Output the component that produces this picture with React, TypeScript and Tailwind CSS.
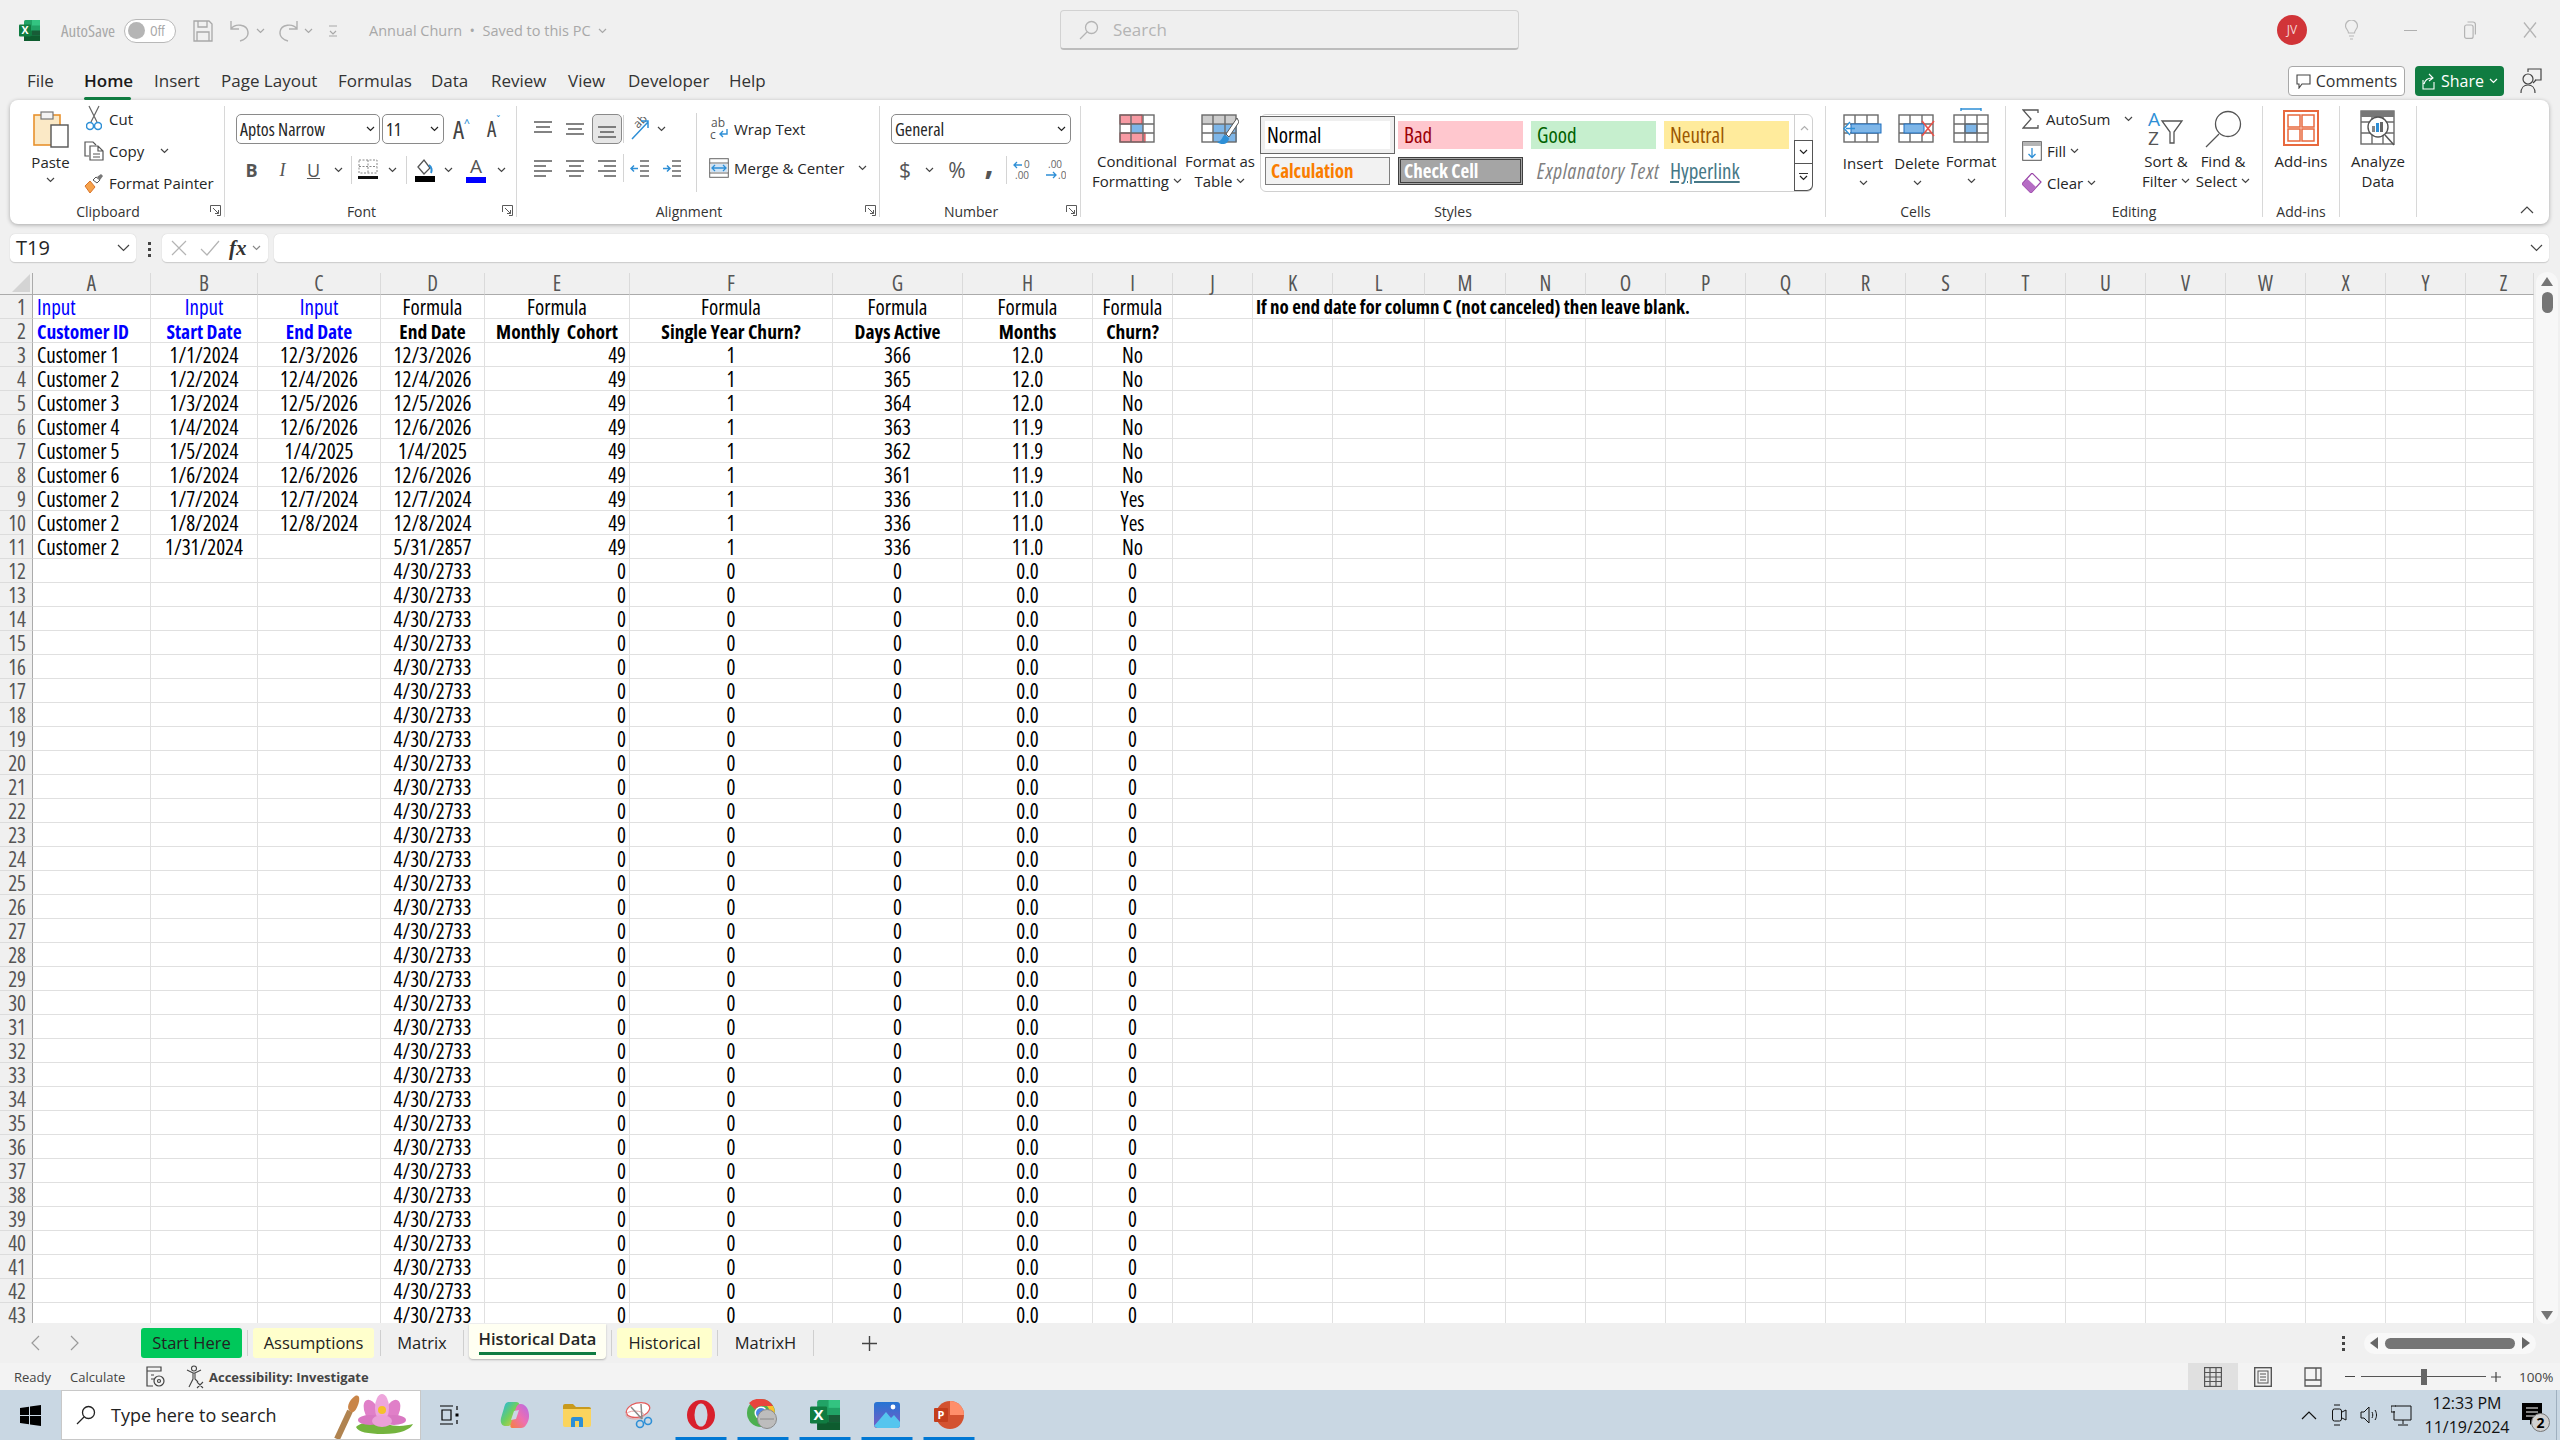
import React from "react";

const Chev = ({ c = "#444", w = 9 }: { c?: string; w?: number }) => (
  <svg width={w} height={6} viewBox="0 0 9 6" fill="none" stroke={c} strokeWidth="1.2"><path d="M1 1l3.5 3.5L8 1" /></svg>
);

const XlLogo = ({ s = 21 }: { s?: number }) => (
  <svg width={s} height={s} viewBox="0 0 21 21">
    <rect x="5" y="0" width="16" height="21" rx="1.5" fill="#21a366" />
    <rect x="13" y="0" width="8" height="5.5" fill="#33c481" />
    <rect x="5" y="10.5" width="8" height="5" fill="#107c41" />
    <rect x="13" y="10.5" width="8" height="5" fill="#185c37" />
    <rect x="5" y="15.5" width="16" height="5.5" fill="#0e5c2f" />
    <rect x="0" y="4.5" width="12" height="12" rx="1" fill="#107c41" />
    <text x="6" y="14" textAnchor="middle" fontSize="10.5" fontWeight="700" fill="#fff" fontFamily="Open Sans, sans-serif">X</text>
  </svg>
);

const Lines = ({ rows, c = "#5a5a5a" }: { rows: [number, number, number][]; c?: string }) => (
  <svg width="20" height="20" viewBox="0 0 20 20" stroke={c} strokeWidth="1.5">
    {rows.map(([a, b, y], i) => <path key={i} d={`M${a} ${y}H${b}`} />)}
  </svg>
);

const TableIcon = ({ w = 36, h = 28 }: { w?: number; h?: number }) => {
  const cols = [Math.round(w / 3), Math.round((2 * w) / 3)];
  const rows = [Math.round(h / 3), Math.round((2 * h) / 3)];
  return (
    <g stroke="#6a6a6a" strokeWidth="1.4" fill="none">
      <rect x="1" y="1" width={w - 2} height={h - 2} />
      {cols.map((x) => <path key={x} d={`M${x} 1V${h - 1}`} />)}
      {rows.map((y) => <path key={y} d={`M1 ${y}H${w - 1}`} />)}
    </g>
  );
};

const BigBtn = ({ icon, l1, l2, chev = true, pt = "pt-[8px]", tmt = "", w }: { icon: React.ReactNode; l1: string; l2?: string; chev?: boolean; pt?: string; tmt?: string; w: string }) => (
  <div className={`flex flex-col items-center ${w}`}>
    <div className={`flex h-[45px] items-start justify-center ${pt}`}>{icon}</div>
    <div className={`whitespace-nowrap text-center leading-[20px] ${tmt}`}>{l1}</div>
    {l2 ? (
      <div className="flex items-center gap-[4px] whitespace-nowrap leading-[20px]">{l2}{chev && <Chev />}</div>
    ) : chev ? (
      <div className="flex h-[20px] items-center"><Chev /></div>
    ) : null}
  </div>
);

const Cellc = ({ w, children, cls = "" }: { w: string; children?: React.ReactNode; cls?: string }) => (
  <div className={`flex h-full shrink-0 items-center justify-center ${w} ${cls}`}>{children}</div>
);

const VSep = () => <div className="h-[28px] w-0 shrink-0 border-l border-[#d4d4d4]" />;

const Launcher = () => (
  <svg width="11" height="11" viewBox="0 0 11 11" fill="none" stroke="#5a5a5a" strokeWidth="1"><path d="M.5 7V.5H10.5V10.5H7" /><path d="M3 3l5.5 5.5M8.5 5v3.5H5" /></svg>
);

const Group = ({ w, label, launcher, children }: { w: string; label?: string; launcher?: boolean; children: React.ReactNode }) => (
  <div className={`relative flex h-[111px] shrink-0 flex-col border-r border-[#d8d8d8] ${w}`}>
    <div className="h-[97px] shrink-0">{children}</div>
    <div className={`relative text-center text-[14px] leading-[18px] text-[#333] ${launcher ? "pr-[18px]" : ""}`}>
      {label}
      {launcher && <span className="absolute right-[3px] top-[2px]"><Launcher /></span>}
    </div>
  </div>
);

const Select = ({ w, text, cls = "" }: { w: string; text: string; cls?: string }) => (
  <div className={`flex h-[30px] shrink-0 items-center justify-between rounded-[5px] border border-[#8a8a8a] bg-white pl-[3px] pr-[4px] text-[18px] ${w} ${cls}`}>
    <span className="whitespace-nowrap [font-stretch:75%]">{text}</span><Chev c="#222" />
  </div>
);

const letters = "ABCDEFGHIJKLMNOPQRSTUVWXYZ".split("");
const data: string[][] = [
  ["Customer 1", "1/1/2024", "12/3/2026", "12/3/2026", "49", "1", "366", "12.0", "No"],
  ["Customer 2", "1/2/2024", "12/4/2026", "12/4/2026", "49", "1", "365", "12.0", "No"],
  ["Customer 3", "1/3/2024", "12/5/2026", "12/5/2026", "49", "1", "364", "12.0", "No"],
  ["Customer 4", "1/4/2024", "12/6/2026", "12/6/2026", "49", "1", "363", "11.9", "No"],
  ["Customer 5", "1/5/2024", "1/4/2025", "1/4/2025", "49", "1", "362", "11.9", "No"],
  ["Customer 6", "1/6/2024", "12/6/2026", "12/6/2026", "49", "1", "361", "11.9", "No"],
  ["Customer 2", "1/7/2024", "12/7/2024", "12/7/2024", "49", "1", "336", "11.0", "Yes"],
  ["Customer 2", "1/8/2024", "12/8/2024", "12/8/2024", "49", "1", "336", "11.0", "Yes"],
  ["Customer 2", "1/31/2024", "", "5/31/2857", "49", "1", "336", "11.0", "No"],
];
const r1 = ["Input", "Input", "Input", "Formula", "Formula", "Formula", "Formula", "Formula", "Formula"];
const r2 = ["Customer ID", "Start Date", "End Date", "End Date", "Monthly  Cohort", "Single Year Churn?", "Days Active", "Months", "Churn?"];
const zero = ["", "", "", "4/30/2733", "0", "0", "0", "0.0", "0"];

const Gc = ({ al, text, cls = "" }: { al: string; text?: string; cls?: string }) => (
  <div className={`flex items-center whitespace-pre border-b border-r border-[#e0e0e0] bg-white pt-[2px] text-black ${al} ${cls}`}>{text}</div>
);

const Rh = ({ n }: { n: number }) => (
  <div className="flex items-center justify-end border-b border-r border-b-[#dcdcdc] border-r-[#ababab] bg-[#f0f0f0] pr-[6px] pt-[1px] text-[#555]">{n}</div>
);

const Sheet = () => {
  const rows: React.ReactNode[] = [];
  for (let r = 1; r <= 43; r++) {
    rows.push(<Rh key={`h${r}`} n={r} />);
    const vals = r === 1 ? r1 : r === 2 ? r2 : r <= 11 ? data[r - 3] : zero;
    for (let c = 0; c < 26; c++) {
      if (r === 1 && c === 10) {
        rows.push(<Gc key="note" al="justify-start pl-[3px]" cls="col-span-6 text-[19px] font-bold" text="If no end date for column C (not canceled) then leave blank." />);
        c = 15;
        continue;
      }
      let cls = "";
      if (r === 1 && c < 3) cls = "!text-[#0000ff]";
      if (r === 2) cls = c < 3 ? "text-[19.5px] font-bold !text-[#0000ff]" : "text-[19.5px] font-bold";
      const al = c === 0 ? "justify-start pl-[4px]" : c === 4 && r > 2 ? "justify-end pr-[3px]" : "justify-center";
      rows.push(<Gc key={`${r}-${c}`} al={al} text={vals[c]} cls={cls} />);
    }
  }
  return (
    <div className="grid h-[1050px] w-[2534px] shrink-0 grid-cols-[33px_118px_107px_123px_104px_145px_203px_130px_130px_80px_80px_80px_92px_81px_80px_80px_80px_80px_80px_80px_80px_80px_80px_80px_80px_80px_68px] auto-rows-[24px] grid-rows-[22px] overflow-hidden text-[21px] leading-[21px] [font-stretch:75%]">
      <div className="flex items-end justify-end border-b border-r border-[#ababab] bg-[#f0f0f0] pb-[2px] pr-[2px]">
        <svg width="18" height="18" viewBox="0 0 18 18"><path d="M18 0V18H0Z" fill="#d4d4d4" /></svg>
      </div>
      {letters.map((l) => (
        <div key={l} className={`flex items-center justify-center border-b border-r border-b-[#ababab] border-r-[#dadada] bg-[#f0f0f0] text-[#555] ${l === "Z" ? "pl-[8px]" : ""}`}>{l}</div>
      ))}
      {rows}
    </div>
  );
};

const SheetTab = ({ t, cls }: { t: string; cls: string }) => (
  <div className={`flex h-[30px] shrink-0 items-center justify-center whitespace-nowrap rounded-[3px] text-[#222] ${cls}`}>{t}</div>
);
const TabSep = ({ cls = "" }: { cls?: string }) => <div className={`h-[26px] w-0 shrink-0 border-l border-[#cfcfcf] ${cls}`} />;

const Ti = ({ u = false, children }: { u?: boolean; children: React.ReactNode }) => (
  <div className="relative flex h-full w-[62px] shrink-0 items-center justify-center">
    {children}
    {u && <span className="absolute bottom-0 left-1/2 h-[3px] w-[51px] -translate-x-1/2 bg-[#0078d4]" />}
  </div>
);

export default function App() {
  return (
    <div className="flex h-[1440px] w-[2560px] flex-col overflow-hidden bg-[#f0f0f0] text-[15px] leading-[20px] text-[#262626] [font-family:'Open_Sans',sans-serif] [font-stretch:88%]">
      {/* Title bar */}
      <div className="flex h-[60px] shrink-0 items-center">
        <div className="flex w-[1060px] shrink-0 items-center pl-[19px] pt-[1px] text-[#a8a8a8]">
          <XlLogo />
          <span className="ml-[21px] w-[54px] whitespace-nowrap text-[17px] [font-stretch:75%]">AutoSave</span>
          <div className="ml-[9px] flex h-[24px] w-[52px] items-center rounded-full border border-[#b8b8b8] bg-white pl-[3px]">
            <span className="h-[17px] w-[17px] rounded-full bg-[#b5b5b5]" />
            <span className="ml-[5px] text-[14px] [font-stretch:75%]">Off</span>
          </div>
          <svg className="ml-[17px]" width="20" height="22" viewBox="0 0 20 22" fill="none" stroke="#a8a8a8" strokeWidth="1.3"><path d="M1 1h15l3 3v17H1z" /><path d="M5 1v6h9V1M4 21v-9h12v9" /></svg>
          <svg className="ml-[16px]" width="22" height="24" viewBox="0 0 22 24" fill="none" stroke="#b0b0b0" strokeWidth="1.4"><path d="M2 2v8h8M2 10c4-6 16-5 17 3 .5 5-4 8-8 9" /></svg>
          <span className="ml-[5px]"><Chev c="#a8a8a8" /></span>
          <svg className="ml-[12px]" width="22" height="24" viewBox="0 0 22 24" fill="none" stroke="#b0b0b0" strokeWidth="1.4"><path d="M20 2v8h-8M20 10C16 4 4 5 3 13c-.5 5 4 8 8 9" /></svg>
          <span className="ml-[5px]"><Chev c="#a8a8a8" /></span>
          <svg className="ml-[15px]" width="10" height="12" viewBox="0 0 10 12" fill="none" stroke="#a8a8a8" strokeWidth="1.2"><path d="M1 1h8M2 6l3 3 3-3M1 11h8" /></svg>
          <span className="ml-[31px] whitespace-pre text-[14.5px]">Annual Churn  •  Saved to this PC</span>
          <span className="ml-[6px]"><Chev c="#a8a8a8" w={11} /></span>
        </div>
        <div className="flex h-[40px] w-[459px] shrink-0 items-center rounded-[4px] border border-b-2 border-[#d2d2d2] border-b-[#bcbcbc] bg-[#efefef] pl-[18px] text-[17px] text-[#b4b4b4]">
          <svg width="20" height="20" viewBox="0 0 20 20" fill="none" stroke="#b4b4b4" strokeWidth="1.3"><circle cx="12.5" cy="7.5" r="6" /><path d="M8 12L1 19" /></svg>
          <span className="ml-[14px]">Search</span>
        </div>
        <div className="ml-auto flex items-center">
          <div className="flex h-[30px] w-[30px] items-center justify-center rounded-full bg-[#d13438] text-[12px] text-[#f5d5d5]">JV</div>
          <div className="ml-[34px] flex w-[20px] justify-center">
            <svg width="13" height="20" viewBox="0 0 13 20" fill="none" stroke="#b8b8b8" strokeWidth="1.2"><path d="M3.5 13c0-3-3-4-3-7a6 6 0 0112 0c0 3-3 4-3 7zM4 16h5M5 19h3" /></svg>
          </div>
          <div className="ml-[43px] h-[1px] w-[13px] bg-[#b0b0b0]" />
          <svg className="ml-[47px]" width="12" height="18" viewBox="0 0 12 18" fill="none" stroke="#b4b4b4" strokeWidth="1.2"><rect x=".6" y="4" width="8.5" height="13.4" rx="2" /><path d="M3.5 1h5.5a2.4 2.4 0 012.4 2.4v10" /></svg>
          <svg className="ml-[47px] mr-[23px]" width="14" height="18" viewBox="0 0 14 18" fill="none" stroke="#b4b4b4" strokeWidth="1.3"><path d="M1 1.5l12 15M13 1.5l-12 15" /></svg>
        </div>
      </div>

      {/* Tabs */}
      <div className="flex h-[40px] shrink-0 items-center pl-[27px] pt-[2px] text-[17px] text-[#333]">
        <span className="w-[57px]">File</span>
        <span className="relative w-[70px] font-semibold text-[#1a1a1a]">Home<span className="absolute bottom-[-9px] left-0 h-[3px] w-[47px] rounded bg-[#107c41]" /></span>
        <span className="w-[67px]">Insert</span>
        <span className="w-[117px]">Page Layout</span>
        <span className="w-[93px]">Formulas</span>
        <span className="w-[60px]">Data</span>
        <span className="w-[77px]">Review</span>
        <span className="w-[60px]">View</span>
        <span className="w-[101px]">Developer</span>
        <span>Help</span>
        <div className="ml-auto flex items-center pr-[18px]">
          <div className="flex h-[30px] w-[117px] items-center justify-center gap-[5px] rounded-[4px] border border-[#a8a8a8] bg-white text-[16px]">
            <svg width="15" height="15" viewBox="0 0 15 15" fill="none" stroke="#444" strokeWidth="1.1"><path d="M1 1h13v9H6l-3 4v-4H1z" /></svg>
            Comments
          </div>
          <div className="ml-[10px] flex h-[30px] w-[89px] items-center justify-center gap-[5px] rounded-[4px] bg-[#107c41] text-[16px] text-white">
            <svg width="15" height="17" viewBox="0 0 15 17" fill="none" stroke="#fff" strokeWidth="1.1"><path d="M2 7v9h11V9M3 11c1-4 4-6 8-6M8 1l4 4-4 3" /></svg>
            Share<Chev c="#fff" />
          </div>
          <svg className="ml-[16px]" width="22" height="26" viewBox="0 0 22 26" fill="none" stroke="#444" strokeWidth="1.2"><circle cx="8" cy="11" r="5" /><path d="M1 25c0-5 3-8 7-8s7 3 7 8" /><path d="M8 4V1h13v11h-6" /><path d="M13 15l3-3" /></svg>
        </div>
      </div>

      {/* Ribbon */}
      <div className="mx-[10px] flex h-[124px] w-[2539px] shrink-0 rounded-[8px] bg-white pt-[6px] shadow-[0_1px_4px_rgba(0,0,0,0.3)]">
        <Group w="w-[215px]" label="Clipboard" launcher>
          <div className="flex h-full">
            <div className="ml-[10px] flex w-[61px] flex-col items-center pt-[4px]">
              <svg width="36" height="38" viewBox="0 0 36 38" fill="none">
                <rect x="1" y="5" width="26" height="30" fill="#fbe9c6" stroke="#e8912d" strokeWidth="1.6" />
                <rect x="8" y="2" width="12" height="7" fill="#f3f3f3" stroke="#777" strokeWidth="1.2" />
                <rect x="18" y="15" width="17" height="22" fill="#fff" stroke="#555" strokeWidth="1.4" />
              </svg>
              <span className="mt-[4px] leading-[20px]">Paste</span>
              <span className="mt-[5px]"><Chev /></span>
            </div>
            <div className="ml-[3px] mt-[-3px] flex flex-col">
              <div className="flex h-[32px] items-center">
                <svg className="ml-[2px]" width="16" height="28" viewBox="0 0 16 28" fill="none"><path d="M3 1l8 16M13 1L5 17" stroke="#666" strokeWidth="1.2" /><circle cx="4" cy="21" r="3.5" stroke="#2e8fd6" strokeWidth="1.5" /><circle cx="12" cy="21" r="3.5" stroke="#2e8fd6" strokeWidth="1.5" /></svg>
                <span className="ml-[7px]">Cut</span>
              </div>
              <div className="flex h-[32px] items-center">
                <svg width="20" height="20" viewBox="0 0 20 20" fill="none" stroke="#555" strokeWidth="1.2"><path d="M5 15H1V1h8l3 3" /><path d="M6 5h8l5 5v9H6zM14 5v5h5M9 13h7M9 16h7" /></svg>
                <span className="ml-[5px]">Copy</span>
                <span className="ml-[16px]"><Chev /></span>
              </div>
              <div className="flex h-[32px] items-center">
                <svg width="20" height="20" viewBox="0 0 20 20"><path d="M6 8l5 6-5 6-5-7z" fill="#f6a24b" stroke="#d9752b" /><path d="M9 7l3-3 4 3-3 3z" fill="#fff" stroke="#555" /><path d="M13 4l4-3 2 2-3 4" fill="#777" /></svg>
                <span className="ml-[5px] whitespace-nowrap">Format Painter</span>
              </div>
            </div>
          </div>
        </Group>

        <Group w="w-[292px]" label="Font" launcher>
          <div className="flex pl-[11px] pt-[8px]">
            <Select w="w-[144px]" text="Aptos Narrow" />
            <Select w="ml-[2px] w-[62px]" text="11" />
            <div className="ml-[9px] flex w-[20px] items-start text-[25px] leading-[30px] text-[#444] [font-stretch:75%]">A<span className="mt-[-6px] text-[13px] text-[#2e8fd6]">^</span></div>
            <div className="ml-[14px] flex w-[20px] items-start text-[21px] leading-[30px] text-[#444] [font-stretch:75%]">A<span className="mt-[-8px] text-[12px] text-[#2e8fd6]">ˇ</span></div>
          </div>
          <div className="ml-[11px] mt-[12px] flex h-[28px] items-center text-[#555]">
            <Cellc w="w-[31px]" cls="text-[18px] font-bold">B</Cellc>
            <Cellc w="w-[31px]" cls="text-[18px] italic [font-family:'Liberation_Serif',serif]">I</Cellc>
            <Cellc w="w-[31px]" cls="text-[18px] underline">U</Cellc>
            <Cellc w="w-[18px]"><Chev /></Cellc>
            <div className="ml-[4px]"><VSep /></div>
            <Cellc w="w-[31px]">
              <svg width="20" height="22" viewBox="0 0 20 22" fill="none"><path d="M1 1h18v13H1zM10 1v13M1 7.5h18" stroke="#888" strokeDasharray="2 1.5" /><rect x="0" y="17" width="20" height="3" fill="#111" /></svg>
            </Cellc>
            <Cellc w="w-[18px]"><Chev /></Cellc>
            <div className="ml-[5px]"><VSep /></div>
            <Cellc w="w-[30px]" cls="ml-[3px]">
              <svg width="20" height="24" viewBox="0 0 20 24"><path d="M3 9l6-7 6 8-6 6z" fill="none" stroke="#555" strokeWidth="1.3" /><path d="M14 7c3 2 3 6 2 8" stroke="#2e8fd6" strokeWidth="2" fill="none" /><rect x="0" y="18" width="20" height="6" fill="#000" /></svg>
            </Cellc>
            <Cellc w="w-[16px]"><Chev /></Cellc>
            <Cellc w="w-[36px]" cls="ml-[2px]">
              <svg width="20" height="26" viewBox="0 0 20 26"><text x="10" y="16" textAnchor="middle" fontSize="19" fill="#555" fontFamily="Open Sans, sans-serif">A</text><rect x="0" y="20" width="20" height="6" fill="#0000ff" /></svg>
            </Cellc>
            <Cellc w="w-[14px]"><Chev /></Cellc>
          </div>
        </Group>

        <Group w="w-[363px]" label="Alignment" launcher>
          <div className="flex pt-[8px]">
            <div className="ml-[10px] flex w-[169px] flex-col">
              <div className="flex h-[30px] items-center">
                <Cellc w="w-[32px]"><Lines rows={[[1, 19, 3], [3, 17, 8], [1, 19, 13]]} /></Cellc>
                <Cellc w="w-[32px]"><Lines rows={[[1, 19, 5], [3, 17, 10], [1, 19, 15]]} /></Cellc>
                <Cellc w="w-[30px]" cls="ml-[1px] rounded-[5px] border border-[#8a8a8a] bg-[#e6e6e6]"><Lines rows={[[1, 19, 8], [3, 17, 13], [1, 19, 18]]} /></Cellc>
                <div className="ml-[1px]"><VSep /></div>
                <Cellc w="w-[32px]">
                  <svg width="24" height="24" viewBox="0 0 24 24"><text x="8" y="13" fontSize="12" fill="#555" transform="rotate(-45 8 10)" fontFamily="Open Sans, sans-serif">ab</text><path d="M4 22L20 5M13 4h7v7" fill="none" stroke="#2e8fd6" strokeWidth="1.5" /></svg>
                </Cellc>
                <Cellc w="w-[10px]"><Chev /></Cellc>
              </div>
              <div className="mt-[10px] flex h-[28px] items-center">
                <Cellc w="w-[32px]"><Lines rows={[[1, 19, 3], [1, 13, 8], [1, 19, 13], [1, 13, 18]]} /></Cellc>
                <Cellc w="w-[32px]"><Lines rows={[[1, 19, 3], [4, 16, 8], [1, 19, 13], [4, 16, 18]]} /></Cellc>
                <Cellc w="w-[32px]"><Lines rows={[[1, 19, 3], [7, 19, 8], [1, 19, 13], [7, 19, 18]]} /></Cellc>
                <VSep />
                <Cellc w="w-[32px]">
                  <svg width="20" height="20" viewBox="0 0 20 20" fill="none"><path d="M10 3h9M10 8h9M10 13h9M10 18h9" stroke="#666" strokeWidth="1.4" /><path d="M8 10.5H1M4 7.5l-3 3 3 3" stroke="#2e8fd6" strokeWidth="1.5" /></svg>
                </Cellc>
                <Cellc w="w-[32px]">
                  <svg width="20" height="20" viewBox="0 0 20 20" fill="none"><path d="M10 3h9M10 8h9M10 13h9M10 18h9" stroke="#666" strokeWidth="1.4" /><path d="M1 10.5h7M5 7.5l3 3-3 3" stroke="#2e8fd6" strokeWidth="1.5" /></svg>
                </Cellc>
              </div>
            </div>
            <div className="mt-[-1px] h-[79px] w-0 border-l border-[#d4d4d4]" />
            <div className="flex flex-col">
              <div className="flex h-[30px] items-center">
                <Cellc w="w-[37px]" cls="pl-[8px]">
                  <svg width="22" height="24" viewBox="0 0 22 24"><text x="2" y="10" fontSize="12" fill="#555" fontFamily="Open Sans, sans-serif">ab</text><text x="1" y="22" fontSize="12" fill="#555" fontFamily="Open Sans, sans-serif">c</text><path d="M18 12v5h-7M14 14l-3 3 3 3" fill="none" stroke="#2e8fd6" strokeWidth="1.4" /></svg>
                </Cellc>
                <span className="whitespace-nowrap">Wrap Text</span>
              </div>
              <div className="mt-[10px] flex h-[28px] items-center">
                <Cellc w="w-[37px]" cls="pl-[6px]">
                  <svg width="20" height="20" viewBox="0 0 20 20" fill="none"><rect x=".7" y=".7" width="18.6" height="18.6" stroke="#666" /><path d="M.7 5h18.6M.7 15h18.6" stroke="#666" /><rect x="2" y="6" width="16" height="8" fill="#cfe3f5" /><path d="M3 10h14M6 7l-3 3 3 3M14 7l3 3-3 3" stroke="#2e8fd6" strokeWidth="1.3" /></svg>
                </Cellc>
                <span className="whitespace-nowrap">Merge &amp; Center</span>
                <span className="ml-[14px]"><Chev /></span>
              </div>
            </div>
          </div>
        </Group>

        <Group w="w-[201px]" label="Number" launcher>
          <div className="pl-[11px] pt-[8px]">
            <Select w="w-[180px]" text="General" />
            <div className="mt-[12px] flex h-[28px] items-center text-[#555]">
              <Cellc w="w-[28px]" cls="text-[21px]">$</Cellc>
              <Cellc w="w-[18px]" cls="ml-[1px]"><Chev /></Cellc>
              <Cellc w="w-[32px]" cls="ml-[3px] text-[21px]">%</Cellc>
              <Cellc w="w-[32px]" cls="text-[32px] font-bold"><span className="mb-[14px]">,</span></Cellc>
              <div className="ml-[1px]"><VSep /></div>
              <Cellc w="w-[32px]">
                <svg width="22" height="22" viewBox="0 0 22 22"><text x="12" y="9" fontSize="10" fill="#666" fontFamily="Open Sans, sans-serif">0</text><text x="3" y="20" fontSize="10" fill="#666" fontFamily="Open Sans, sans-serif">.00</text><path d="M10 6H2M5 3L2 6l3 3" fill="none" stroke="#2e8fd6" strokeWidth="1.3" /></svg>
              </Cellc>
              <Cellc w="w-[32px]">
                <svg width="22" height="22" viewBox="0 0 22 22"><text x="4" y="9" fontSize="10" fill="#666" fontFamily="Open Sans, sans-serif">.00</text><text x="14" y="20" fontSize="10" fill="#666" fontFamily="Open Sans, sans-serif">.0</text><path d="M2 16h10M9 13l3 3-3 3" fill="none" stroke="#2e8fd6" strokeWidth="1.3" /></svg>
              </Cellc>
            </div>
          </div>
        </Group>

        <Group w="w-[745px]" label="Styles">
          <div className="flex">
            <BigBtn w="ml-[19px] w-[74px] shrink-0" l1="Conditional" l2="Formatting" icon={
              <svg width="36" height="29" viewBox="0 0 36 29">
                <rect x="1" y="1" width="22" height="9" fill="#f79aa3" stroke="#d0343a" />
                <rect x="1" y="19" width="25" height="9" fill="#f79aa3" stroke="#d0343a" />
                <rect x="12" y="10" width="12" height="9" fill="#7eb6e8" />
                <TableIcon h={29} />
              </svg>} />
            <BigBtn w="ml-[8px] w-[76px] shrink-0" l1="Format as" l2="Table" icon={
              <svg width="38" height="33" viewBox="0 0 38 33">
                <rect x="12" y="10" width="24" height="18" fill="#7eb6e8" />
                <rect x="1" y="1" width="34" height="8" fill="#cdcdcd" />
                <TableIcon h={29} />
                <path d="M36 4L25 20l3 3L38 8z" fill="#fff" stroke="#555" />
                <path d="M24 21c-3 0-2 6-8 7 5 4 12 2 12-4z" fill="#2e8fd6" />
              </svg>} />
            <div className="ml-[2px] mt-[8px] flex h-[78px] w-[553px] shrink-0 rounded-[6px] border border-[#d0d0d0] bg-white">
              <div className="grid w-[528px] shrink-0 grid-cols-[125px_125px_125px_125px] grid-rows-[28px_28px] gap-x-[8px] gap-y-[8px] pl-[4px] pt-[6px] text-[21px] [font-stretch:75%]">
                <div className="z-10 -m-[4px] flex items-center border-[4px] border-[#efefef] bg-white pl-[2px] text-black outline outline-[1.5px] outline-[#666]">Normal</div>
                <div className="flex items-center bg-[#ffc7ce] pl-[6px] text-[#9c0006]">Bad</div>
                <div className="flex items-center bg-[#c6efce] pl-[6px] text-[#006100]">Good</div>
                <div className="flex items-center bg-[#ffeb9c] pl-[6px] text-[#9c5700]">Neutral</div>
                <div className="flex items-center border border-[#7f7f7f] bg-[#f2f2f2] pl-[5px] text-[19px] font-bold text-[#fa7d00]">Calculation</div>
                <div className="flex items-center border-[3px] border-double border-[#3f3f3f] bg-[#a5a5a5] pl-[3px] text-[19px] font-bold text-white">Check Cell</div>
                <div className="flex items-center whitespace-nowrap pl-[6px] italic tracking-[0.8px] text-[#7f7f7f]">Explanatory Text</div>
                <div className="flex items-center pl-[6px] text-[#467886] underline">Hyperlink</div>
              </div>
              <div className="ml-[5px] flex w-[19px] shrink-0 flex-col border-l border-[#d0d0d0]">
                <div className="flex h-[25px] items-center justify-center"><svg width="9" height="6" viewBox="0 0 9 6" fill="none" stroke="#b0b0b0" strokeWidth="1.2"><path d="M1 5l3.5-3.5L8 5" /></svg></div>
                <div className="-ml-[1px] flex h-[24px] items-center justify-center border border-[#555]"><Chev c="#222" /></div>
                <div className="-ml-[1px] flex flex-1 flex-col items-center justify-center gap-[1px] rounded-br-[6px] border border-t-0 border-[#555]"><div className="h-[1px] w-[9px] bg-[#333]" /><Chev c="#222" /></div>
              </div>
            </div>
          </div>
        </Group>

        <Group w="w-[180px]" label="Cells">
          <div className="flex pl-[10px]">
            <BigBtn w="w-[54px]" l1="Insert" tmt="mt-[2px]" icon={
              <svg width="40" height="29" viewBox="0 0 40 29">
                <TableIcon h={29} />
                <rect x="8" y="10" width="30" height="9" fill="#7eb6e8" stroke="#1e6fbf" />
                <path d="M12 14.5H3M7 8l-6 6.5L7 21" fill="#fff" stroke="#2e8fd6" strokeWidth="1.4" />
              </svg>} />
            <BigBtn w="w-[54px]" l1="Delete" tmt="mt-[2px]" icon={
              <svg width="38" height="29" viewBox="0 0 38 29">
                <TableIcon h={29} />
                <rect x="6" y="10" width="20" height="9" fill="#7eb6e8" stroke="#1e6fbf" />
                <path d="M24 7l12 15M36 7L24 22" stroke="#e8524a" strokeWidth="1.6" />
              </svg>} />
            <BigBtn w="w-[54px]" l1="Format" pt="pt-[2px]" icon={
              <svg width="36" height="35" viewBox="0 0 36 35">
                <path d="M8 1h20M8 0v3M28 0v3" stroke="#2e8fd6" strokeWidth="1.4" />
                <g transform="translate(0,6)"><rect x="12" y="10" width="12" height="9" fill="#7eb6e8" stroke="#1e6fbf" /><TableIcon h={29} /></g>
              </svg>} />
          </div>
        </Group>

        <Group w="w-[257px]" label="Editing">
          <div className="flex">
            <div className="ml-[16px] mt-[-3px] flex w-[116px] shrink-0 flex-col">
              <div className="flex h-[32px] items-center">
                <svg width="18" height="20" viewBox="0 0 18 20" fill="none" stroke="#555" strokeWidth="1.3"><path d="M16 4V1H1l8 9-8 9h15v-3" /></svg>
                <span className="ml-[6px]">AutoSum</span>
                <span className="ml-[14px]"><Chev /></span>
              </div>
              <div className="flex h-[32px] items-center">
                <svg width="20" height="20" viewBox="0 0 20 20" fill="none"><rect x=".7" y=".7" width="18.6" height="18.6" stroke="#555" /><rect x="1" y="1" width="18" height="4" fill="#b5b5b5" /><path d="M10 7v9M6.5 13l3.5 3.5 3.5-3.5" stroke="#2e8fd6" strokeWidth="1.3" /></svg>
                <span className="ml-[5px]">Fill</span>
                <span className="ml-[4px]"><Chev /></span>
              </div>
              <div className="flex h-[32px] items-center">
                <svg width="20" height="20" viewBox="0 0 20 20"><path d="M10 0l9 9-10 11-9-9z" fill="#fff" stroke="#9a46a8" strokeWidth="1.2" /><path d="M5.5 6L14 14l-5 6-9-9z" fill="#b56cc4" /></svg>
                <span className="ml-[5px]">Clear</span>
                <span className="ml-[4px]"><Chev /></span>
              </div>
            </div>
            <BigBtn w="w-[56px] shrink-0" l1="Sort &" l2="Filter" pt="pt-[4px]" icon={
              <svg width="38" height="37" viewBox="0 0 38 37">
                <text x="1" y="16" fontSize="19" fill="#2e8fd6" fontFamily="Open Sans, sans-serif">A</text>
                <text x="1" y="35" fontSize="19" fill="#555" fontFamily="Open Sans, sans-serif">Z</text>
                <path d="M15 11h20l-8 11v11h-4V22z" fill="#fff" stroke="#555" strokeWidth="1.3" />
              </svg>} />
            <BigBtn w="w-[58px] shrink-0" l1="Find &" l2="Select" pt="pt-[4px]" icon={
              <svg width="38" height="38" viewBox="0 0 38 38" fill="none" stroke="#555" strokeWidth="1.3"><circle cx="24" cy="14" r="12.5" /><path d="M15 24L2 37" /></svg>} />
          </div>
        </Group>

        <Group w="w-[77px]" label="Add-ins">
          <BigBtn w="w-full" l1="Add-ins" chev={false} pt="pt-[4px]" icon={
            <svg width="36" height="36" viewBox="0 0 36 36" fill="none" stroke="#e8693e" strokeWidth="1.5"><rect x="1" y="1" width="34" height="34" strokeWidth="2" /><rect x="5" y="5" width="12" height="12" /><rect x="19" y="5" width="12" height="12" /><rect x="5" y="19" width="12" height="12" /><rect x="19" y="19" width="12" height="12" /></svg>} />
        </Group>

        <Group w="w-[77px]">
          <BigBtn w="w-full" l1="Analyze" l2="Data" chev={false} pt="pt-[4px]" icon={
            <svg width="36" height="36" viewBox="0 0 36 36" fill="none">
              <TableIcon w={35} h={35} />
              <rect x="1" y="1" width="33" height="6" fill="#777" />
              <circle cx="18" cy="17" r="10" fill="#fff" stroke="#555" strokeWidth="1.4" />
              <rect x="12" y="16" width="3" height="6" fill="#888" /><rect x="16" y="13" width="3" height="9" fill="#2e8fd6" /><rect x="20" y="12" width="3" height="10" fill="#666" />
              <path d="M25 25l9 10" stroke="#555" strokeWidth="1.5" />
            </svg>} />
        </Group>

        <div className="flex h-[111px] flex-1 items-end justify-end pb-[3px] pr-[15px]">
          <svg width="14" height="9" viewBox="0 0 14 9" fill="none" stroke="#444" strokeWidth="1.2"><path d="M1 8l6-6 6 6" /></svg>
        </div>
      </div>

      {/* Formula bar */}
      <div className="ml-[10px] mt-[10px] flex h-[29px] w-[2539px] shrink-0 items-stretch text-[20px]">
        <div className="flex w-[126px] items-center justify-between rounded-[5px] border-b border-[#cfcfcf] bg-white pl-[6px] pr-[6px] shadow-[0_0_1px_#bbb]">
          T19 <svg width="13" height="8" viewBox="0 0 13 8" fill="none" stroke="#444" strokeWidth="1.2"><path d="M1 1l5.5 5.5L12 1" /></svg>
        </div>
        <div className="flex w-[26px] flex-col items-center justify-center gap-[3px] pt-[1px]">
          <span className="h-[3px] w-[3px] bg-[#444]" /><span className="h-[3px] w-[3px] bg-[#444]" /><span className="h-[3px] w-[3px] bg-[#444]" />
        </div>
        <div className="flex w-[106px] items-center rounded-[5px] border-b border-[#cfcfcf] bg-white pl-[9px] shadow-[0_0_1px_#bbb]">
          <svg width="16" height="16" viewBox="0 0 16 16" fill="none" stroke="#b4b4b4" strokeWidth="1.2"><path d="M1 1l14 14M15 1L1 15" /></svg>
          <svg className="ml-[13px]" width="20" height="16" viewBox="0 0 20 16" fill="none" stroke="#b4b4b4" strokeWidth="1.2"><path d="M1 9l6 6L19 1" /></svg>
          <span className="ml-[9px] text-[21px] font-semibold italic leading-none text-[#333] [font-family:'Liberation_Serif',serif]">fx</span>
          <span className="ml-[5px]"><Chev c="#888" /></span>
        </div>
        <div className="ml-[6px] flex flex-1 items-center justify-end rounded-[5px] border-b border-[#cfcfcf] bg-white pr-[6px] shadow-[0_0_1px_#bbb]">
          <svg width="13" height="8" viewBox="0 0 13 8" fill="none" stroke="#444" strokeWidth="1.2"><path d="M1 1l5.5 5.5L12 1" /></svg>
        </div>
      </div>

      {/* Sheet */}
      <div className="mt-[10px] flex h-[1050px] shrink-0">
        <Sheet />
        <div className="ml-[2px] mt-[-1px] flex h-[1052px] w-[22px] flex-col items-center justify-between rounded-full bg-[#f7f7f7] pb-[4px] pt-[5px]">
          <div className="flex flex-col items-center gap-[4px]">
            <svg width="12" height="9" viewBox="0 0 12 9"><path d="M6 0l6 9H0z" fill="#757575" /></svg>
            <div className="mt-[2px] h-[21px] w-[11px] rounded-full bg-[#757575]" />
          </div>
          <svg width="12" height="9" viewBox="0 0 12 9"><path d="M6 9L0 0h12z" fill="#757575" /></svg>
        </div>
      </div>

      {/* Sheet tabs */}
      <div className="flex h-[40px] shrink-0 items-center text-[16.5px]">
        <svg className="ml-[31px]" width="9" height="16" viewBox="0 0 9 16" fill="none" stroke="#9a9a9a" strokeWidth="1.2"><path d="M8 1L1 8l7 7" /></svg>
        <svg className="ml-[30px]" width="9" height="16" viewBox="0 0 9 16" fill="none" stroke="#9a9a9a" strokeWidth="1.2"><path d="M1 1l7 7-7 7" /></svg>
        <SheetTab t="Start Here" cls="ml-[62px] mt-[-1px] w-[101px] bg-[#00c85a]" />
        <TabSep cls="ml-[5px]" />
        <SheetTab t="Assumptions" cls="ml-[5px] mt-[-1px] w-[121px] bg-[#ffffcc]" />
        <TabSep cls="ml-[6px]" />
        <SheetTab t="Matrix" cls="mt-[-1px] w-[82px]" />
        <TabSep />
        <div className="relative ml-[5px] mt-[-4px] flex h-[35px] w-[137px] shrink-0 flex-col items-center rounded-b-[4px] bg-[#fffff2] pt-[5px] font-semibold shadow-[0_1px_2px_rgba(0,0,0,0.25)]">
          <span className="whitespace-nowrap">Historical Data</span>
          <span className="absolute bottom-[4px] left-[10px] h-[3px] w-[117px] bg-[#107c41]" />
        </div>
        <TabSep cls="ml-[5px]" />
        <SheetTab t="Historical" cls="ml-[5px] mt-[-1px] w-[95px] bg-[#ffffcc]" />
        <TabSep cls="ml-[5px]" />
        <SheetTab t="MatrixH" cls="mt-[-1px] w-[95px]" />
        <TabSep />
        <svg className="ml-[48px]" width="15" height="15" viewBox="0 0 15 15" stroke="#444" strokeWidth="1.4"><path d="M7.5 0v15M0 7.5h15" /></svg>
        <div className="ml-auto flex items-center">
          <div className="flex flex-col gap-[3px]"><span className="h-[3px] w-[3px] bg-[#444]" /><span className="h-[3px] w-[3px] bg-[#444]" /><span className="h-[3px] w-[3px] bg-[#444]" /></div>
          <div className="ml-[19px] mr-[24px] flex h-[21px] w-[172px] items-center justify-between rounded-full bg-[#f8f8f8] px-[6px]">
            <svg width="8" height="12" viewBox="0 0 8 12"><path d="M0 6l8-6v12z" fill="#666" /></svg>
            <div className="h-[11px] w-[130px] rounded-full bg-[#757575]" />
            <svg width="8" height="12" viewBox="0 0 8 12"><path d="M8 6L0 0v12z" fill="#666" /></svg>
          </div>
        </div>
      </div>

      {/* Status bar */}
      <div className="flex h-[27px] shrink-0 items-center bg-[#f3f3f3] pl-[14px] text-[13px] text-[#444]">
        <span className="w-[56px]">Ready</span>
        <span className="w-[76px]">Calculate</span>
        <svg width="20" height="22" viewBox="0 0 20 22" fill="none" stroke="#444" strokeWidth="1.2"><path d="M1 1h14v4H1zM1 5v15h6M5 9h3M5 13h3" /><circle cx="13" cy="15" r="5" /><circle cx="13" cy="15" r="1.5" /></svg>
        <svg className="ml-[20px]" width="19" height="24" viewBox="0 0 19 24" fill="none" stroke="#444" strokeWidth="1.1"><circle cx="8" cy="3.5" r="2.5" /><path d="M1 5l6 3h2l6-3M7 8v6L3 22M9 8v6l3 3M11 17l6 6M17 17l-6 6" /></svg>
        <span className="ml-[4px] font-bold">Accessibility: Investigate</span>
        <div className="ml-auto flex h-full items-center">
          <div className="flex h-full w-[50px] items-center justify-center bg-[#e0e0e0]">
            <svg width="18" height="20" viewBox="0 0 18 20" fill="none" stroke="#555" strokeWidth="1.2"><rect x=".6" y=".6" width="16.8" height="18.8" /><path d="M6 1v18M12 1v18M1 5.5h16M1 10h16M1 14.5h16" /></svg>
          </div>
          <div className="flex h-full w-[50px] items-center justify-center">
            <svg width="18" height="20" viewBox="0 0 18 20" fill="none" stroke="#555" strokeWidth="1.4"><rect x=".7" y=".7" width="16.6" height="18.6" /><rect x="4" y="4" width="10" height="12" strokeWidth="1" /><path d="M6 7h6M6 10h6M6 13h6" strokeWidth="1" /></svg>
          </div>
          <div className="flex h-full w-[50px] items-center justify-center">
            <svg width="18" height="20" viewBox="0 0 18 20" fill="none" stroke="#555" strokeWidth="1.3"><path d="M1 1h16v18H1zM1 13h11V1M12 13h5" /></svg>
          </div>
          <div className="ml-[7px] h-[1.5px] w-[10px] bg-[#444]" />
          <div className="relative ml-[6px] flex h-[20px] w-[125px] items-center">
            <div className="h-[1px] w-full bg-[#555]" />
            <div className="absolute left-[60px] top-[2px] h-[16px] w-[6px] bg-[#666]" />
          </div>
          <svg className="ml-[5px]" width="10" height="10" viewBox="0 0 10 10" stroke="#444" strokeWidth="1.2"><path d="M5 0v10M0 5h10" /></svg>
          <span className="ml-[18px] mr-[11px] w-[30px] whitespace-nowrap text-[13.5px]">100%</span>
        </div>
      </div>

      {/* Taskbar */}
      <div className="flex h-[50px] shrink-0 items-stretch bg-[#c9d7e3] text-black">
        <div className="flex w-[61px] items-center justify-center">
          <svg width="21" height="21" viewBox="0 0 21 21" fill="#000"><path d="M0 3l9-1.3V10H0zM10 1.5L21 0v10H10zM0 11h9v8.3L0 18zM10 11h11v10l-11-1.5z" /></svg>
        </div>
        <div className="flex w-[360px] items-center border border-[#c8c8c8] bg-white pl-[14px] text-[18px] text-[#222]">
          <svg width="20" height="20" viewBox="0 0 20 20" fill="none" stroke="#222" strokeWidth="1.3"><circle cx="12.5" cy="7.5" r="6" /><path d="M8 12L1 19" /></svg>
          <span className="ml-[15px] whitespace-nowrap">Type here to search</span>
          <svg className="ml-auto mr-[4px]" width="90" height="48" viewBox="0 0 90 48">
            <path d="M11 48L24 20" stroke="#b08350" strokeWidth="6" />
            <path d="M25 21c-6-3-2-12 4-16 5-2 5 4 3 9-2 5-4 8-7 7z" fill="#c98548" />
            <path d="M30 36c6-6 22-6 30-3 10 3 20 2 27 0-2 5-12 10-30 10-15 0-25-2-27-7z" fill="#74b43e" />
            <ellipse cx="46" cy="21" rx="7" ry="13" fill="#e07fc8" transform="rotate(-25 46 21)" />
            <ellipse cx="66" cy="21" rx="7" ry="13" fill="#e07fc8" transform="rotate(25 66 21)" />
            <ellipse cx="56" cy="17" rx="7" ry="14" fill="#eea6dc" />
            <ellipse cx="44" cy="29" rx="12" ry="5" fill="#d978c2" />
            <ellipse cx="68" cy="29" rx="12" ry="5" fill="#d978c2" />
            <ellipse cx="56" cy="30" rx="10" ry="6" fill="#eba0d8" />
            <circle cx="56" cy="19" r="4" fill="#f5c02c" />
          </svg>
        </div>
        <div className="ml-[19px] flex w-[20px] shrink-0 items-center">
          <svg width="20" height="20" viewBox="0 0 20 20" fill="none" stroke="#000" strokeWidth="1.2"><path d="M0 1h13M0 19h13M2 5h9v10H2z" /><path d="M17 1v4M17 15v4" /><rect x="15.5" y="8.5" width="3" height="3" fill="#000" stroke="none" /></svg>
        </div>
        <div className="ml-[24px] flex">
          <Ti>
            <svg width="30" height="30" viewBox="0 0 30 30">
              <defs>
                <linearGradient id="cp1" x1="0" y1="0" x2="1" y2="1"><stop offset="0" stopColor="#1fb6ea" /><stop offset=".5" stopColor="#6fcf5e" /><stop offset="1" stopColor="#f6c83a" /></linearGradient>
                <linearGradient id="cp2" x1="1" y1="0" x2="0" y2="1"><stop offset="0" stopColor="#b46be8" /><stop offset=".5" stopColor="#ee6fb0" /><stop offset="1" stopColor="#f5813d" /></linearGradient>
              </defs>
              <path d="M9 2h7c3 0 4 2 3 5l-4 12c-2 5-4 7-8 7H6c-4 0-6-3-5-8l3-10c1-4 2-6 5-6z" fill="url(#cp1)" />
              <path d="M21 28h-8c-3 0-3-2-2-5l5-15c.7-2 2-4 4-4 3 0 6 1 8 6 2 6 1 11-2 15-1 2-3 3-5 3z" fill="url(#cp2)" />
              <path d="M14 11l5-1-3 9-5 1z" fill="#c9d7e3" />
            </svg>
          </Ti>
          <Ti>
            <svg width="28" height="24" viewBox="0 0 28 24"><path d="M0 3a2 2 0 012-2h8l3 3h13a2 2 0 012 2v2H0z" fill="#c99a1c" /><path d="M0 6h28v16a2 2 0 01-2 2H2a2 2 0 01-2-2z" fill="#fbd45e" /><path d="M8 24v-8a2 2 0 012-2h8a2 2 0 012 2v8h-4v-6h-4v6z" fill="#2d8fd6" /></svg>
          </Ti>
          <Ti>
            <svg width="28" height="28" viewBox="0 0 28 28" fill="none"><ellipse cx="13" cy="9" rx="12" ry="7" fill="#fff" stroke="#e45b5b" strokeWidth="1.3" transform="rotate(-15 13 9)" /><ellipse cx="10" cy="14" rx="9" ry="4" stroke="#e8a0a0" /><path d="M6 6l11 12M16 3l1 15" stroke="#8a8a8a" strokeWidth="1.5" /><circle cx="15" cy="23" r="3.5" stroke="#2e8fd6" strokeWidth="1.6" /><circle cx="23" cy="20" r="3.5" stroke="#2e8fd6" strokeWidth="1.6" /></svg>
          </Ti>
          <Ti u>
            <svg width="30" height="30" viewBox="0 0 30 30"><ellipse cx="15" cy="15" rx="14" ry="15" fill="#d8202c" /><ellipse cx="15" cy="15" rx="6.5" ry="11.5" fill="#c9d7e3" /></svg>
          </Ti>
          <Ti u>
            <svg width="32" height="32" viewBox="0 0 32 32">
              <circle cx="14" cy="14" r="14" fill="#4caf50" /><path d="M14 0a14 14 0 0112 7H14a7 7 0 00-6 3.5L2 4a14 14 0 0112-4z" fill="#e8453c" /><path d="M26 7a14 14 0 01-12 21l6-10.5A7 7 0 0020 7z" fill="#fbc02d" /><circle cx="14" cy="14" r="6.5" fill="#fff" /><circle cx="14" cy="14" r="5" fill="#4a86e8" />
              <circle cx="20" cy="20" r="9.5" fill="#bdbdbd" stroke="#8a8a8a" /><path d="M13 20h14" stroke="#8a8a8a" />
            </svg>
          </Ti>
          <Ti u><XlLogo s={30} /></Ti>
          <Ti u>
            <svg width="26" height="26" viewBox="0 0 26 26">
              <defs><linearGradient id="ph" x1="0" y1="0" x2="0" y2="1"><stop offset="0" stopColor="#2474d4" /><stop offset="1" stopColor="#7b5cc4" /></linearGradient></defs>
              <rect width="26" height="26" rx="3" fill="url(#ph)" /><circle cx="19" cy="5" r="2.4" fill="#fff" /><path d="M0 24L12 10l5 6 3-3 6 7v3a3 3 0 01-3 3H3z" fill="#55c5ee" />
            </svg>
          </Ti>
          <Ti u>
            <svg width="30" height="28" viewBox="0 0 30 28">
              <circle cx="16" cy="14" r="14" fill="#d35230" /><path d="M16 0a14 14 0 0114 14H16z" fill="#ff8f6b" /><rect x="0" y="7" width="14" height="14" rx="1" fill="#c43e1c" />
              <text x="7" y="18" textAnchor="middle" fontSize="11" fontWeight="700" fill="#fff" fontFamily="Open Sans, sans-serif">P</text>
            </svg>
          </Ti>
        </div>
        <div className="ml-auto flex items-center">
          <svg width="16" height="10" viewBox="0 0 16 10" fill="none" stroke="#111" strokeWidth="1.2"><path d="M1 9l7-7 7 7" /></svg>
          <svg className="ml-[15px]" width="15" height="22" viewBox="0 0 15 22" fill="none" stroke="#111" strokeWidth="1"><rect x=".5" y="5" width="9" height="12" rx="2" /><path d="M10 8l4-2v10l-4-2M2 1h6M2 21h6" /></svg>
          <svg className="ml-[13px]" width="20" height="20" viewBox="0 0 20 20" fill="none" stroke="#111" strokeWidth="1"><path d="M1 7h3l5-5v16l-5-5H1zM12 7c1 2 1 4 0 6M15 5c2 3 2 7 0 10" /></svg>
          <svg className="ml-[11px]" width="21" height="21" viewBox="0 0 21 21" fill="none" stroke="#111" strokeWidth="1"><path d="M4 1h16v14H3M5 1H0v6h4M3 15V6M12 15v4M7 20h10" /></svg>
          <div className="ml-[14px] flex w-[82px] flex-col items-center text-[16px] leading-[24px] text-[#111]">
            <span>12:33 PM</span><span>11/19/2024</span>
          </div>
          <div className="relative ml-[14px] mr-[14px] h-[24px] w-[20px]">
            <svg width="20" height="22" viewBox="0 0 20 22"><path d="M0 0h20v17h-8l-4 5v-5H0z" fill="#000" /><path d="M4 5h12M4 9h12M4 13h12" stroke="#fff" /></svg>
            <span className="absolute left-[9px] top-[10px] flex h-[19px] w-[19px] items-center justify-center rounded-full border border-[#777] bg-[#d0d0d0] text-[14px] font-bold">2</span>
          </div>
          <div className="h-full w-[1px] bg-[#9fb0bf]" />
          <div className="w-[3px]" />
        </div>
      </div>
    </div>
  );
}
